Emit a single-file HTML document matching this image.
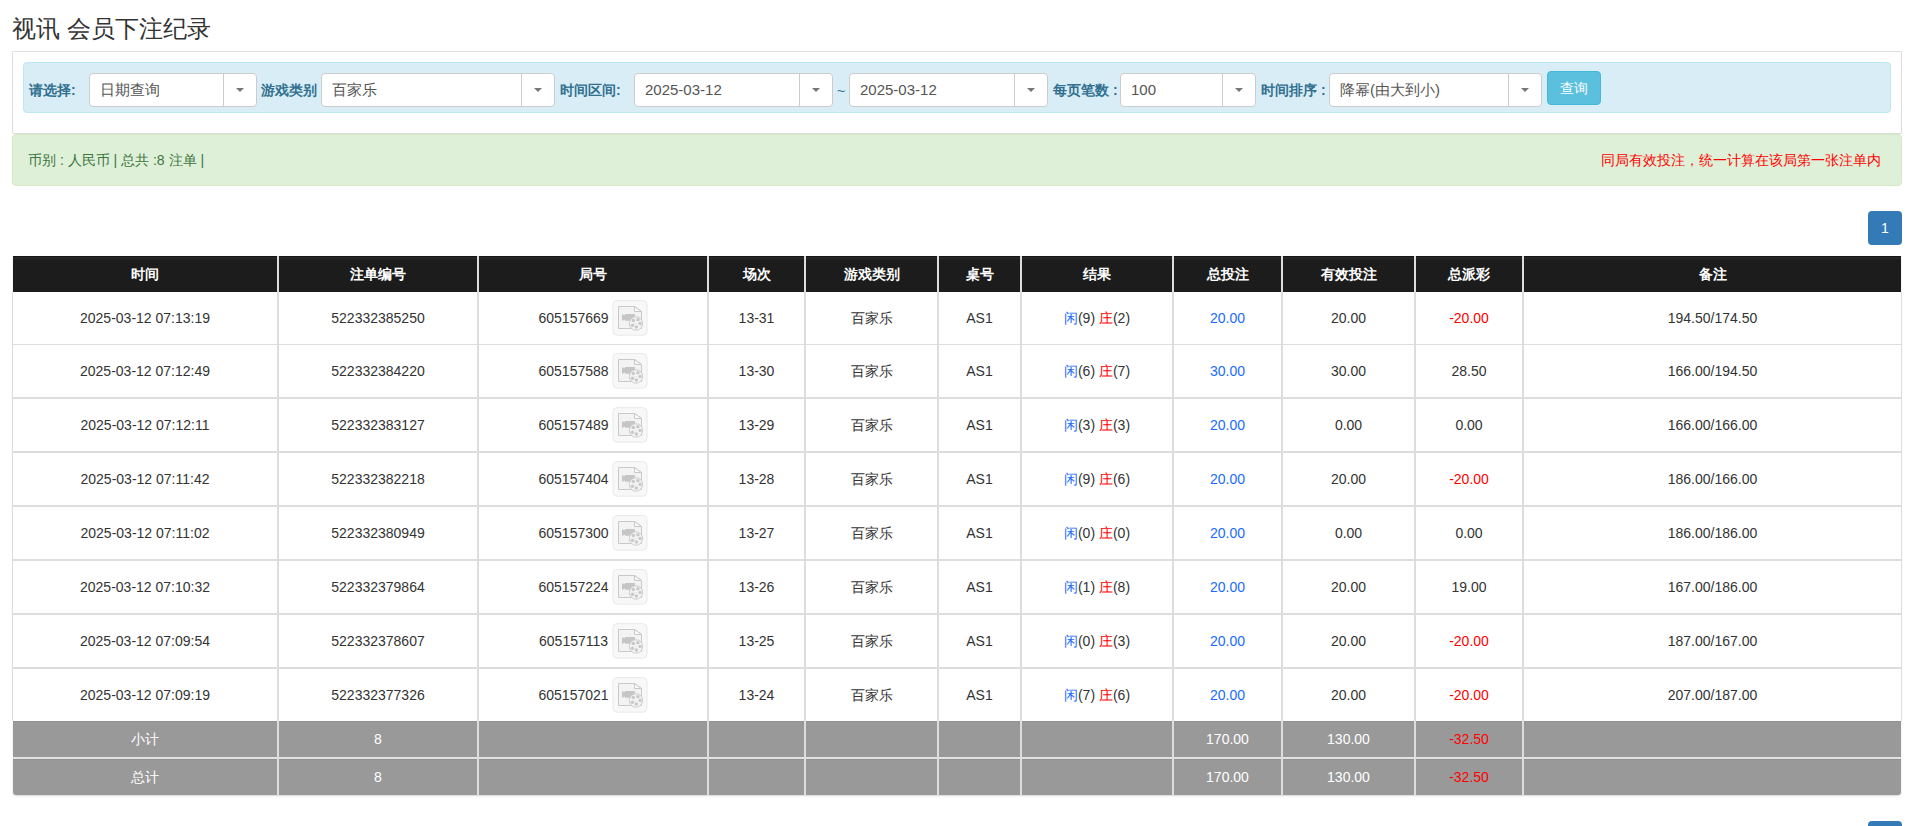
<!DOCTYPE html>
<html><head><meta charset="utf-8"><title>视讯 会员下注纪录</title>
<style>
html,body{margin:0;padding:0;background:#fff;}
body{width:1916px;height:826px;overflow:hidden;position:relative;font-family:"Liberation Sans",sans-serif;font-size:14px;color:#333;}
.a{position:absolute;box-sizing:border-box;}
.t{position:absolute;white-space:nowrap;}
.lbl{position:absolute;font-weight:bold;color:#31708f;font-size:14px;line-height:20px;white-space:nowrap;}
.sel{position:absolute;box-sizing:border-box;height:34px;border:1px solid #ccc;border-radius:4px;background:#fff;}
.sel .v{position:absolute;left:10px;top:0;line-height:32px;font-size:15px;color:#555;white-space:nowrap;}
.sel .d{position:absolute;top:0;bottom:0;width:1px;background:#ccc;}
.sel .c{position:absolute;top:14px;width:0;height:0;border-left:4px solid transparent;border-right:4px solid transparent;border-top:4px solid #777;}
.cell{position:absolute;text-align:center;white-space:nowrap;}
.ic{vertical-align:middle;}
</style></head><body>

<div class="t" style="left:12px;top:13px;font-size:24px;line-height:32px;color:#333">视讯 会员下注纪录</div>
<div class="a" style="left:12px;top:51px;width:1890px;height:83px;border:1px solid #ddd;border-radius:1px"></div>
<div class="a" style="left:23px;top:62px;width:1868px;height:51px;background:#d9edf7;border:1px solid #bce8f1;border-radius:4px"></div>
<div class="lbl" style="left:29px;top:80px">请选择:</div>
<div class="lbl" style="left:261px;top:80px">游戏类别</div>
<div class="lbl" style="left:560px;top:80px">时间区间:</div>
<div class="lbl" style="left:1053px;top:80px">每页笔数 :</div>
<div class="lbl" style="left:1261px;top:80px">时间排序 :</div>
<div class="t" style="left:837px;top:81px;line-height:20px;color:#31708f">~</div>
<div class="sel" style="left:89px;top:73px;width:168px"><div class="v">日期查询</div><div class="d" style="left:133px"></div><div class="c" style="left:146px"></div></div>
<div class="sel" style="left:321px;top:73px;width:234px"><div class="v">百家乐</div><div class="d" style="left:199px"></div><div class="c" style="left:212px"></div></div>
<div class="sel" style="left:634px;top:73px;width:199px"><div class="v">2025-03-12</div><div class="d" style="left:164px"></div><div class="c" style="left:177px"></div></div>
<div class="sel" style="left:849px;top:73px;width:199px"><div class="v">2025-03-12</div><div class="d" style="left:164px"></div><div class="c" style="left:177px"></div></div>
<div class="sel" style="left:1120px;top:73px;width:136px"><div class="v">100</div><div class="d" style="left:101px"></div><div class="c" style="left:114px"></div></div>
<div class="sel" style="left:1329px;top:73px;width:213px"><div class="v">降幂(由大到小)</div><div class="d" style="left:178px"></div><div class="c" style="left:191px"></div></div>
<div class="a" style="left:1547px;top:71px;width:54px;height:34px;background:#5bc0de;border:1px solid #46b8da;border-radius:4px;color:#fff;font-size:14px;line-height:32px;text-align:center">查询</div>
<div class="a" style="left:12px;top:134px;width:1890px;height:52px;background:#dff0d8;border:1px solid #d6e9c6;border-radius:4px"></div>
<div class="t" style="left:28px;top:150px;line-height:20px;color:#3c763d;font-size:14px">币别 : 人民币 | 总共 :8 注单 |</div>
<div class="t" style="right:35px;top:150px;line-height:20px;color:#f00;font-size:14px">同局有效投注，统一计算在该局第一张注单内</div>
<div class="a" style="left:1868px;top:211px;width:34px;height:34px;background:#337ab7;border-radius:4px;color:#fff;font-size:14px;line-height:34px;text-align:center">1</div>
<div class="a" style="left:1868px;top:821px;width:34px;height:34px;background:#337ab7;border-radius:4px;color:#fff;font-size:14px;line-height:34px;text-align:center">1</div>
<div class="a" style="left:13px;top:256px;width:1888px;height:539px;border-radius:0 0 3px 3px;box-shadow:0 1px 2px rgba(0,0,0,.16);background:#fff"></div>
<div class="a" style="left:13px;top:256px;width:1888px;height:36px;background:#1c1c1c;border-top:1px solid #151515;background-image:linear-gradient(#2a2a2a,#1c1c1c 4px)"></div>
<div class="a" style="left:12px;top:292px;width:1px;height:429px;background:#ddd"></div>
<div class="a" style="left:1901px;top:292px;width:1px;height:429px;background:#ddd"></div>
<div class="a" style="left:12px;top:344px;width:1890px;height:1px;background:#ddd"></div>
<div class="a" style="left:12px;top:397px;width:1890px;height:2px;background:#ddd"></div>
<div class="a" style="left:12px;top:451px;width:1890px;height:2px;background:#ddd"></div>
<div class="a" style="left:12px;top:505px;width:1890px;height:2px;background:#ddd"></div>
<div class="a" style="left:12px;top:559px;width:1890px;height:2px;background:#ddd"></div>
<div class="a" style="left:12px;top:613px;width:1890px;height:2px;background:#ddd"></div>
<div class="a" style="left:12px;top:667px;width:1890px;height:2px;background:#ddd"></div>
<div class="a" style="left:13px;top:721px;width:1888px;height:36px;background:#999;border-top:1px solid #909090;"></div>
<div class="a" style="left:13px;top:759px;width:1888px;height:36px;background:#999;border-top:1px solid #909090;border-radius:0 0 3px 3px;"></div>
<div class="a" style="left:13px;top:757px;width:1888px;height:2px;background:#e2e2e2"></div>
<div class="a" style="left:277px;top:256px;width:2px;height:539px;background:#ddd"></div>
<div class="a" style="left:477px;top:256px;width:2px;height:539px;background:#ddd"></div>
<div class="a" style="left:707px;top:256px;width:2px;height:539px;background:#ddd"></div>
<div class="a" style="left:804px;top:256px;width:2px;height:539px;background:#ddd"></div>
<div class="a" style="left:937px;top:256px;width:2px;height:539px;background:#ddd"></div>
<div class="a" style="left:1020px;top:256px;width:2px;height:539px;background:#ddd"></div>
<div class="a" style="left:1172px;top:256px;width:2px;height:539px;background:#ddd"></div>
<div class="a" style="left:1281px;top:256px;width:2px;height:539px;background:#ddd"></div>
<div class="a" style="left:1414px;top:256px;width:2px;height:539px;background:#ddd"></div>
<div class="a" style="left:1522px;top:256px;width:2px;height:539px;background:#ddd"></div>
<div class="cell" style="left:13px;width:264px;top:256px;height:36px;line-height:36px;color:#fff;font-weight:bold">时间</div>
<div class="cell" style="left:279px;width:198px;top:256px;height:36px;line-height:36px;color:#fff;font-weight:bold">注单编号</div>
<div class="cell" style="left:479px;width:228px;top:256px;height:36px;line-height:36px;color:#fff;font-weight:bold">局号</div>
<div class="cell" style="left:709px;width:95px;top:256px;height:36px;line-height:36px;color:#fff;font-weight:bold">场次</div>
<div class="cell" style="left:806px;width:131px;top:256px;height:36px;line-height:36px;color:#fff;font-weight:bold">游戏类别</div>
<div class="cell" style="left:939px;width:81px;top:256px;height:36px;line-height:36px;color:#fff;font-weight:bold">桌号</div>
<div class="cell" style="left:1022px;width:150px;top:256px;height:36px;line-height:36px;color:#fff;font-weight:bold">结果</div>
<div class="cell" style="left:1174px;width:107px;top:256px;height:36px;line-height:36px;color:#fff;font-weight:bold">总投注</div>
<div class="cell" style="left:1283px;width:131px;top:256px;height:36px;line-height:36px;color:#fff;font-weight:bold">有效投注</div>
<div class="cell" style="left:1416px;width:106px;top:256px;height:36px;line-height:36px;color:#fff;font-weight:bold">总派彩</div>
<div class="cell" style="left:1524px;width:377px;top:256px;height:36px;line-height:36px;color:#fff;font-weight:bold">备注</div>
<div class="cell" style="left:13px;width:264px;top:292px;height:52px;line-height:52px">2025-03-12 07:13:19</div>
<div class="cell" style="left:279px;width:198px;top:292px;height:52px;line-height:52px">522332385250</div>
<div class="cell" style="left:479px;width:228px;top:292px;height:52px;line-height:52px">605157669 <span style="display:inline-block;width:35px;height:1px"></span></div>
<div class="a" style="left:612px;top:300px;width:36px;height:36px"><svg width="36" height="36" viewBox="0 0 36 36"><rect x="1" y="0.6" width="34" height="34.6" rx="4" fill="#f8f8f8" stroke="#e9e9e9"/><path d="M6.5 6.5H22.5L29.5 11.5V28.5H6.5Z" fill="#f3f3f3" stroke="#c9c9c9"/><path d="M22.5 6.5V11.5H29.5Z" fill="#fbfbfb" stroke="#c9c9c9" stroke-linejoin="bevel"/><path d="M10 14.2L12.7 15.2L13.1 13.9H22.9V20.7H13.1L12.7 19.5L10 20.9Z" fill="#c6c6c6"/><circle cx="24" cy="23.5" r="6.7" fill="#f5f5f5" stroke="#cdcdcd"/><circle cx="21.4" cy="20.5" r="1.8" fill="#c9c9c9"/><circle cx="25.9" cy="19.8" r="1.8" fill="#c9c9c9"/><circle cx="28.1" cy="23.5" r="1.8" fill="#c9c9c9"/><circle cx="24.4" cy="27" r="1.8" fill="#c9c9c9"/><circle cx="20.5" cy="25.3" r="1.8" fill="#c9c9c9"/><circle cx="23.9" cy="23.5" r="0.6" fill="#d0d0d0"/></svg></div>
<div class="cell" style="left:709px;width:95px;top:292px;height:52px;line-height:52px">13-31</div>
<div class="cell" style="left:806px;width:131px;top:292px;height:52px;line-height:52px">百家乐</div>
<div class="cell" style="left:939px;width:81px;top:292px;height:52px;line-height:52px">AS1</div>
<div class="cell" style="left:1022px;width:150px;top:292px;height:52px;line-height:52px"><span style="color:#1a6bff">闲</span>(9) <span style="color:#f00">庄</span>(2)</div>
<div class="cell" style="left:1174px;width:107px;top:292px;height:52px;line-height:52px;color:#1a6bff">20.00</div>
<div class="cell" style="left:1283px;width:131px;top:292px;height:52px;line-height:52px">20.00</div>
<div class="cell" style="left:1416px;width:106px;top:292px;height:52px;line-height:52px;color:#f00">-20.00</div>
<div class="cell" style="left:1524px;width:377px;top:292px;height:52px;line-height:52px">194.50/174.50</div>
<div class="cell" style="left:13px;width:264px;top:345px;height:52px;line-height:52px">2025-03-12 07:12:49</div>
<div class="cell" style="left:279px;width:198px;top:345px;height:52px;line-height:52px">522332384220</div>
<div class="cell" style="left:479px;width:228px;top:345px;height:52px;line-height:52px">605157588 <span style="display:inline-block;width:35px;height:1px"></span></div>
<div class="a" style="left:612px;top:353px;width:36px;height:36px"><svg width="36" height="36" viewBox="0 0 36 36"><rect x="1" y="0.6" width="34" height="34.6" rx="4" fill="#f8f8f8" stroke="#e9e9e9"/><path d="M6.5 6.5H22.5L29.5 11.5V28.5H6.5Z" fill="#f3f3f3" stroke="#c9c9c9"/><path d="M22.5 6.5V11.5H29.5Z" fill="#fbfbfb" stroke="#c9c9c9" stroke-linejoin="bevel"/><path d="M10 14.2L12.7 15.2L13.1 13.9H22.9V20.7H13.1L12.7 19.5L10 20.9Z" fill="#c6c6c6"/><circle cx="24" cy="23.5" r="6.7" fill="#f5f5f5" stroke="#cdcdcd"/><circle cx="21.4" cy="20.5" r="1.8" fill="#c9c9c9"/><circle cx="25.9" cy="19.8" r="1.8" fill="#c9c9c9"/><circle cx="28.1" cy="23.5" r="1.8" fill="#c9c9c9"/><circle cx="24.4" cy="27" r="1.8" fill="#c9c9c9"/><circle cx="20.5" cy="25.3" r="1.8" fill="#c9c9c9"/><circle cx="23.9" cy="23.5" r="0.6" fill="#d0d0d0"/></svg></div>
<div class="cell" style="left:709px;width:95px;top:345px;height:52px;line-height:52px">13-30</div>
<div class="cell" style="left:806px;width:131px;top:345px;height:52px;line-height:52px">百家乐</div>
<div class="cell" style="left:939px;width:81px;top:345px;height:52px;line-height:52px">AS1</div>
<div class="cell" style="left:1022px;width:150px;top:345px;height:52px;line-height:52px"><span style="color:#1a6bff">闲</span>(6) <span style="color:#f00">庄</span>(7)</div>
<div class="cell" style="left:1174px;width:107px;top:345px;height:52px;line-height:52px;color:#1a6bff">30.00</div>
<div class="cell" style="left:1283px;width:131px;top:345px;height:52px;line-height:52px">30.00</div>
<div class="cell" style="left:1416px;width:106px;top:345px;height:52px;line-height:52px">28.50</div>
<div class="cell" style="left:1524px;width:377px;top:345px;height:52px;line-height:52px">166.00/194.50</div>
<div class="cell" style="left:13px;width:264px;top:399px;height:52px;line-height:52px">2025-03-12 07:12:11</div>
<div class="cell" style="left:279px;width:198px;top:399px;height:52px;line-height:52px">522332383127</div>
<div class="cell" style="left:479px;width:228px;top:399px;height:52px;line-height:52px">605157489 <span style="display:inline-block;width:35px;height:1px"></span></div>
<div class="a" style="left:612px;top:407px;width:36px;height:36px"><svg width="36" height="36" viewBox="0 0 36 36"><rect x="1" y="0.6" width="34" height="34.6" rx="4" fill="#f8f8f8" stroke="#e9e9e9"/><path d="M6.5 6.5H22.5L29.5 11.5V28.5H6.5Z" fill="#f3f3f3" stroke="#c9c9c9"/><path d="M22.5 6.5V11.5H29.5Z" fill="#fbfbfb" stroke="#c9c9c9" stroke-linejoin="bevel"/><path d="M10 14.2L12.7 15.2L13.1 13.9H22.9V20.7H13.1L12.7 19.5L10 20.9Z" fill="#c6c6c6"/><circle cx="24" cy="23.5" r="6.7" fill="#f5f5f5" stroke="#cdcdcd"/><circle cx="21.4" cy="20.5" r="1.8" fill="#c9c9c9"/><circle cx="25.9" cy="19.8" r="1.8" fill="#c9c9c9"/><circle cx="28.1" cy="23.5" r="1.8" fill="#c9c9c9"/><circle cx="24.4" cy="27" r="1.8" fill="#c9c9c9"/><circle cx="20.5" cy="25.3" r="1.8" fill="#c9c9c9"/><circle cx="23.9" cy="23.5" r="0.6" fill="#d0d0d0"/></svg></div>
<div class="cell" style="left:709px;width:95px;top:399px;height:52px;line-height:52px">13-29</div>
<div class="cell" style="left:806px;width:131px;top:399px;height:52px;line-height:52px">百家乐</div>
<div class="cell" style="left:939px;width:81px;top:399px;height:52px;line-height:52px">AS1</div>
<div class="cell" style="left:1022px;width:150px;top:399px;height:52px;line-height:52px"><span style="color:#1a6bff">闲</span>(3) <span style="color:#f00">庄</span>(3)</div>
<div class="cell" style="left:1174px;width:107px;top:399px;height:52px;line-height:52px;color:#1a6bff">20.00</div>
<div class="cell" style="left:1283px;width:131px;top:399px;height:52px;line-height:52px">0.00</div>
<div class="cell" style="left:1416px;width:106px;top:399px;height:52px;line-height:52px">0.00</div>
<div class="cell" style="left:1524px;width:377px;top:399px;height:52px;line-height:52px">166.00/166.00</div>
<div class="cell" style="left:13px;width:264px;top:453px;height:52px;line-height:52px">2025-03-12 07:11:42</div>
<div class="cell" style="left:279px;width:198px;top:453px;height:52px;line-height:52px">522332382218</div>
<div class="cell" style="left:479px;width:228px;top:453px;height:52px;line-height:52px">605157404 <span style="display:inline-block;width:35px;height:1px"></span></div>
<div class="a" style="left:612px;top:461px;width:36px;height:36px"><svg width="36" height="36" viewBox="0 0 36 36"><rect x="1" y="0.6" width="34" height="34.6" rx="4" fill="#f8f8f8" stroke="#e9e9e9"/><path d="M6.5 6.5H22.5L29.5 11.5V28.5H6.5Z" fill="#f3f3f3" stroke="#c9c9c9"/><path d="M22.5 6.5V11.5H29.5Z" fill="#fbfbfb" stroke="#c9c9c9" stroke-linejoin="bevel"/><path d="M10 14.2L12.7 15.2L13.1 13.9H22.9V20.7H13.1L12.7 19.5L10 20.9Z" fill="#c6c6c6"/><circle cx="24" cy="23.5" r="6.7" fill="#f5f5f5" stroke="#cdcdcd"/><circle cx="21.4" cy="20.5" r="1.8" fill="#c9c9c9"/><circle cx="25.9" cy="19.8" r="1.8" fill="#c9c9c9"/><circle cx="28.1" cy="23.5" r="1.8" fill="#c9c9c9"/><circle cx="24.4" cy="27" r="1.8" fill="#c9c9c9"/><circle cx="20.5" cy="25.3" r="1.8" fill="#c9c9c9"/><circle cx="23.9" cy="23.5" r="0.6" fill="#d0d0d0"/></svg></div>
<div class="cell" style="left:709px;width:95px;top:453px;height:52px;line-height:52px">13-28</div>
<div class="cell" style="left:806px;width:131px;top:453px;height:52px;line-height:52px">百家乐</div>
<div class="cell" style="left:939px;width:81px;top:453px;height:52px;line-height:52px">AS1</div>
<div class="cell" style="left:1022px;width:150px;top:453px;height:52px;line-height:52px"><span style="color:#1a6bff">闲</span>(9) <span style="color:#f00">庄</span>(6)</div>
<div class="cell" style="left:1174px;width:107px;top:453px;height:52px;line-height:52px;color:#1a6bff">20.00</div>
<div class="cell" style="left:1283px;width:131px;top:453px;height:52px;line-height:52px">20.00</div>
<div class="cell" style="left:1416px;width:106px;top:453px;height:52px;line-height:52px;color:#f00">-20.00</div>
<div class="cell" style="left:1524px;width:377px;top:453px;height:52px;line-height:52px">186.00/166.00</div>
<div class="cell" style="left:13px;width:264px;top:507px;height:52px;line-height:52px">2025-03-12 07:11:02</div>
<div class="cell" style="left:279px;width:198px;top:507px;height:52px;line-height:52px">522332380949</div>
<div class="cell" style="left:479px;width:228px;top:507px;height:52px;line-height:52px">605157300 <span style="display:inline-block;width:35px;height:1px"></span></div>
<div class="a" style="left:612px;top:515px;width:36px;height:36px"><svg width="36" height="36" viewBox="0 0 36 36"><rect x="1" y="0.6" width="34" height="34.6" rx="4" fill="#f8f8f8" stroke="#e9e9e9"/><path d="M6.5 6.5H22.5L29.5 11.5V28.5H6.5Z" fill="#f3f3f3" stroke="#c9c9c9"/><path d="M22.5 6.5V11.5H29.5Z" fill="#fbfbfb" stroke="#c9c9c9" stroke-linejoin="bevel"/><path d="M10 14.2L12.7 15.2L13.1 13.9H22.9V20.7H13.1L12.7 19.5L10 20.9Z" fill="#c6c6c6"/><circle cx="24" cy="23.5" r="6.7" fill="#f5f5f5" stroke="#cdcdcd"/><circle cx="21.4" cy="20.5" r="1.8" fill="#c9c9c9"/><circle cx="25.9" cy="19.8" r="1.8" fill="#c9c9c9"/><circle cx="28.1" cy="23.5" r="1.8" fill="#c9c9c9"/><circle cx="24.4" cy="27" r="1.8" fill="#c9c9c9"/><circle cx="20.5" cy="25.3" r="1.8" fill="#c9c9c9"/><circle cx="23.9" cy="23.5" r="0.6" fill="#d0d0d0"/></svg></div>
<div class="cell" style="left:709px;width:95px;top:507px;height:52px;line-height:52px">13-27</div>
<div class="cell" style="left:806px;width:131px;top:507px;height:52px;line-height:52px">百家乐</div>
<div class="cell" style="left:939px;width:81px;top:507px;height:52px;line-height:52px">AS1</div>
<div class="cell" style="left:1022px;width:150px;top:507px;height:52px;line-height:52px"><span style="color:#1a6bff">闲</span>(0) <span style="color:#f00">庄</span>(0)</div>
<div class="cell" style="left:1174px;width:107px;top:507px;height:52px;line-height:52px;color:#1a6bff">20.00</div>
<div class="cell" style="left:1283px;width:131px;top:507px;height:52px;line-height:52px">0.00</div>
<div class="cell" style="left:1416px;width:106px;top:507px;height:52px;line-height:52px">0.00</div>
<div class="cell" style="left:1524px;width:377px;top:507px;height:52px;line-height:52px">186.00/186.00</div>
<div class="cell" style="left:13px;width:264px;top:561px;height:52px;line-height:52px">2025-03-12 07:10:32</div>
<div class="cell" style="left:279px;width:198px;top:561px;height:52px;line-height:52px">522332379864</div>
<div class="cell" style="left:479px;width:228px;top:561px;height:52px;line-height:52px">605157224 <span style="display:inline-block;width:35px;height:1px"></span></div>
<div class="a" style="left:612px;top:569px;width:36px;height:36px"><svg width="36" height="36" viewBox="0 0 36 36"><rect x="1" y="0.6" width="34" height="34.6" rx="4" fill="#f8f8f8" stroke="#e9e9e9"/><path d="M6.5 6.5H22.5L29.5 11.5V28.5H6.5Z" fill="#f3f3f3" stroke="#c9c9c9"/><path d="M22.5 6.5V11.5H29.5Z" fill="#fbfbfb" stroke="#c9c9c9" stroke-linejoin="bevel"/><path d="M10 14.2L12.7 15.2L13.1 13.9H22.9V20.7H13.1L12.7 19.5L10 20.9Z" fill="#c6c6c6"/><circle cx="24" cy="23.5" r="6.7" fill="#f5f5f5" stroke="#cdcdcd"/><circle cx="21.4" cy="20.5" r="1.8" fill="#c9c9c9"/><circle cx="25.9" cy="19.8" r="1.8" fill="#c9c9c9"/><circle cx="28.1" cy="23.5" r="1.8" fill="#c9c9c9"/><circle cx="24.4" cy="27" r="1.8" fill="#c9c9c9"/><circle cx="20.5" cy="25.3" r="1.8" fill="#c9c9c9"/><circle cx="23.9" cy="23.5" r="0.6" fill="#d0d0d0"/></svg></div>
<div class="cell" style="left:709px;width:95px;top:561px;height:52px;line-height:52px">13-26</div>
<div class="cell" style="left:806px;width:131px;top:561px;height:52px;line-height:52px">百家乐</div>
<div class="cell" style="left:939px;width:81px;top:561px;height:52px;line-height:52px">AS1</div>
<div class="cell" style="left:1022px;width:150px;top:561px;height:52px;line-height:52px"><span style="color:#1a6bff">闲</span>(1) <span style="color:#f00">庄</span>(8)</div>
<div class="cell" style="left:1174px;width:107px;top:561px;height:52px;line-height:52px;color:#1a6bff">20.00</div>
<div class="cell" style="left:1283px;width:131px;top:561px;height:52px;line-height:52px">20.00</div>
<div class="cell" style="left:1416px;width:106px;top:561px;height:52px;line-height:52px">19.00</div>
<div class="cell" style="left:1524px;width:377px;top:561px;height:52px;line-height:52px">167.00/186.00</div>
<div class="cell" style="left:13px;width:264px;top:615px;height:52px;line-height:52px">2025-03-12 07:09:54</div>
<div class="cell" style="left:279px;width:198px;top:615px;height:52px;line-height:52px">522332378607</div>
<div class="cell" style="left:479px;width:228px;top:615px;height:52px;line-height:52px">605157113 <span style="display:inline-block;width:35px;height:1px"></span></div>
<div class="a" style="left:612px;top:623px;width:36px;height:36px"><svg width="36" height="36" viewBox="0 0 36 36"><rect x="1" y="0.6" width="34" height="34.6" rx="4" fill="#f8f8f8" stroke="#e9e9e9"/><path d="M6.5 6.5H22.5L29.5 11.5V28.5H6.5Z" fill="#f3f3f3" stroke="#c9c9c9"/><path d="M22.5 6.5V11.5H29.5Z" fill="#fbfbfb" stroke="#c9c9c9" stroke-linejoin="bevel"/><path d="M10 14.2L12.7 15.2L13.1 13.9H22.9V20.7H13.1L12.7 19.5L10 20.9Z" fill="#c6c6c6"/><circle cx="24" cy="23.5" r="6.7" fill="#f5f5f5" stroke="#cdcdcd"/><circle cx="21.4" cy="20.5" r="1.8" fill="#c9c9c9"/><circle cx="25.9" cy="19.8" r="1.8" fill="#c9c9c9"/><circle cx="28.1" cy="23.5" r="1.8" fill="#c9c9c9"/><circle cx="24.4" cy="27" r="1.8" fill="#c9c9c9"/><circle cx="20.5" cy="25.3" r="1.8" fill="#c9c9c9"/><circle cx="23.9" cy="23.5" r="0.6" fill="#d0d0d0"/></svg></div>
<div class="cell" style="left:709px;width:95px;top:615px;height:52px;line-height:52px">13-25</div>
<div class="cell" style="left:806px;width:131px;top:615px;height:52px;line-height:52px">百家乐</div>
<div class="cell" style="left:939px;width:81px;top:615px;height:52px;line-height:52px">AS1</div>
<div class="cell" style="left:1022px;width:150px;top:615px;height:52px;line-height:52px"><span style="color:#1a6bff">闲</span>(0) <span style="color:#f00">庄</span>(3)</div>
<div class="cell" style="left:1174px;width:107px;top:615px;height:52px;line-height:52px;color:#1a6bff">20.00</div>
<div class="cell" style="left:1283px;width:131px;top:615px;height:52px;line-height:52px">20.00</div>
<div class="cell" style="left:1416px;width:106px;top:615px;height:52px;line-height:52px;color:#f00">-20.00</div>
<div class="cell" style="left:1524px;width:377px;top:615px;height:52px;line-height:52px">187.00/167.00</div>
<div class="cell" style="left:13px;width:264px;top:669px;height:52px;line-height:52px">2025-03-12 07:09:19</div>
<div class="cell" style="left:279px;width:198px;top:669px;height:52px;line-height:52px">522332377326</div>
<div class="cell" style="left:479px;width:228px;top:669px;height:52px;line-height:52px">605157021 <span style="display:inline-block;width:35px;height:1px"></span></div>
<div class="a" style="left:612px;top:677px;width:36px;height:36px"><svg width="36" height="36" viewBox="0 0 36 36"><rect x="1" y="0.6" width="34" height="34.6" rx="4" fill="#f8f8f8" stroke="#e9e9e9"/><path d="M6.5 6.5H22.5L29.5 11.5V28.5H6.5Z" fill="#f3f3f3" stroke="#c9c9c9"/><path d="M22.5 6.5V11.5H29.5Z" fill="#fbfbfb" stroke="#c9c9c9" stroke-linejoin="bevel"/><path d="M10 14.2L12.7 15.2L13.1 13.9H22.9V20.7H13.1L12.7 19.5L10 20.9Z" fill="#c6c6c6"/><circle cx="24" cy="23.5" r="6.7" fill="#f5f5f5" stroke="#cdcdcd"/><circle cx="21.4" cy="20.5" r="1.8" fill="#c9c9c9"/><circle cx="25.9" cy="19.8" r="1.8" fill="#c9c9c9"/><circle cx="28.1" cy="23.5" r="1.8" fill="#c9c9c9"/><circle cx="24.4" cy="27" r="1.8" fill="#c9c9c9"/><circle cx="20.5" cy="25.3" r="1.8" fill="#c9c9c9"/><circle cx="23.9" cy="23.5" r="0.6" fill="#d0d0d0"/></svg></div>
<div class="cell" style="left:709px;width:95px;top:669px;height:52px;line-height:52px">13-24</div>
<div class="cell" style="left:806px;width:131px;top:669px;height:52px;line-height:52px">百家乐</div>
<div class="cell" style="left:939px;width:81px;top:669px;height:52px;line-height:52px">AS1</div>
<div class="cell" style="left:1022px;width:150px;top:669px;height:52px;line-height:52px"><span style="color:#1a6bff">闲</span>(7) <span style="color:#f00">庄</span>(6)</div>
<div class="cell" style="left:1174px;width:107px;top:669px;height:52px;line-height:52px;color:#1a6bff">20.00</div>
<div class="cell" style="left:1283px;width:131px;top:669px;height:52px;line-height:52px">20.00</div>
<div class="cell" style="left:1416px;width:106px;top:669px;height:52px;line-height:52px;color:#f00">-20.00</div>
<div class="cell" style="left:1524px;width:377px;top:669px;height:52px;line-height:52px">207.00/187.00</div>
<div class="cell" style="left:13px;width:264px;top:721px;height:36px;line-height:36px;color:#fff">小计</div>
<div class="cell" style="left:279px;width:198px;top:721px;height:36px;line-height:36px;color:#fff">8</div>
<div class="cell" style="left:1174px;width:107px;top:721px;height:36px;line-height:36px;color:#fff">170.00</div>
<div class="cell" style="left:1283px;width:131px;top:721px;height:36px;line-height:36px;color:#fff">130.00</div>
<div class="cell" style="left:1416px;width:106px;top:721px;height:36px;line-height:36px;color:#f00">-32.50</div>
<div class="cell" style="left:13px;width:264px;top:759px;height:36px;line-height:36px;color:#fff">总计</div>
<div class="cell" style="left:279px;width:198px;top:759px;height:36px;line-height:36px;color:#fff">8</div>
<div class="cell" style="left:1174px;width:107px;top:759px;height:36px;line-height:36px;color:#fff">170.00</div>
<div class="cell" style="left:1283px;width:131px;top:759px;height:36px;line-height:36px;color:#fff">130.00</div>
<div class="cell" style="left:1416px;width:106px;top:759px;height:36px;line-height:36px;color:#f00">-32.50</div>
</body></html>
